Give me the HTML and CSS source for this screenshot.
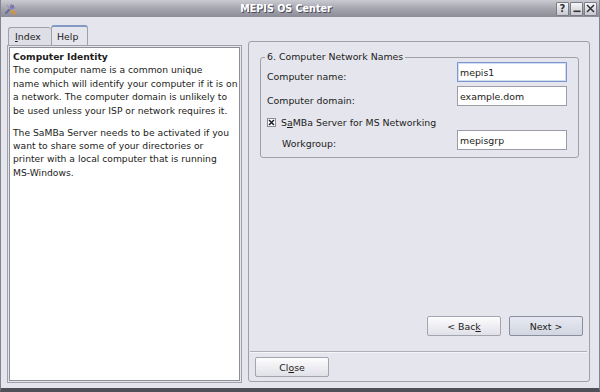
FILE: index.html
```html
<!DOCTYPE html>
<html lang="en">
<head>
    <meta charset="UTF-8">
    <title>MEPIS OS Center</title>
    <link rel="stylesheet" href="styles.css">
</head>
<body>
    <div class="window">
        <div class="titlebar">
            <span class="app-icon">
                <svg width="12" height="12" viewBox="0 0 12 12">
                    <path d="M2 10 L9 3" stroke="#6a6a9a" stroke-width="2" stroke-linecap="round"/>
                    <path d="M8 1.5 A2 2 0 1 0 10.5 4" fill="none" stroke="#8a7ab8" stroke-width="1.4"/>
                    <path d="M3 2 L8 8" stroke="#9a9ab0" stroke-width="1.2"/>
                    <path d="M8 8 L10.5 10.5" stroke="#e8901c" stroke-width="2.2" stroke-linecap="round"/>
                </svg>
            </span>
            <span class="title">MEPIS OS Center</span>
            <div class="wm-buttons">
                <span class="wm-btn">?</span>
                <span class="wm-btn">
                    <svg width="8" height="9" viewBox="0 0 8 9"><rect x="0.5" y="6.5" width="7" height="1.6" fill="#303038"/></svg>
                </span>
                <span class="wm-btn">
                    <svg width="9" height="9" viewBox="0 0 9 9"><path d="M1 1 L8 8 M8 1 L1 8" stroke="#303038" stroke-width="1.5"/></svg>
                </span>
            </div>
        </div>

        <div class="main">
            <!-- Help sidebar -->
            <div class="sidebar">
                <div class="tabs">
                    <div class="tab tab-index"><u>I</u>ndex</div>
                    <div class="tab tab-help active">Help</div>
                </div>
                <div class="tab-pane">
                    <div class="help-text">
                        <p><b>Computer Identity</b><br>The computer name is a common unique<br>name which will identify your computer if it is on<br>a network. The computer domain is unlikely to<br>be used unless your ISP or network requires it.</p>
                        <p>The SaMBa Server needs to be activated if you<br>want to share some of your directories or<br>printer with a local computer that is running<br>MS-Windows.</p>
                    </div>
                </div>
            </div>

            <!-- Wizard page -->
            <div class="wizard">
                <fieldset class="group">
                    <legend>6. Computer Network Names</legend>
                    <div class="field-row first">
                        <label>Computer name:</label>
                        <div class="input focused">mepis1</div>
                    </div>
                    <div class="field-row">
                        <label>Computer domain:</label>
                        <div class="input">example.dom</div>
                    </div>
                    <div class="check-row">
                        <span class="checkbox">
                            <svg width="7" height="7" viewBox="0 0 7 7"><path d="M1 1 L6 6 M6 1 L1 6" stroke="#202028" stroke-width="1.6"/></svg>
                        </span>
                        <span>S<u>a</u>MBa Server for MS Networking</span>
                    </div>
                    <div class="field-row sub">
                        <label>Workgroup:</label>
                        <div class="input">mepisgrp</div>
                    </div>
                </fieldset>

                <div class="spacer"></div>

                <div class="nav">
                    <button class="btn">&lt; Bac<u>k</u></button>
                    <button class="btn default">Next &gt;</button>
                </div>
                <div class="separator"></div>
                <div class="footer">
                    <button class="btn">Cl<u>o</u>se</button>
                </div>
            </div>
        </div>
    </div>
</body>
</html>
```

FILE: styles.css
```css
:root {
    --bg: #e5e5ed;
    --frame: #a0a0a8;
    --text: #1c1c20;
}

body {
    margin: 0;
    background: var(--bg);
    color: var(--text);
    font-family: "DejaVu Sans", "Liberation Sans", sans-serif;
    font-size: 9.4px;
}

.window {
    width: 600px;
    height: 392px;
    box-sizing: border-box;
    display: flex;
    flex-direction: column;
    border-left: 1px solid #84848e;
    border-right: 1px solid #84848e;
    border-bottom: 4px solid #50505a;
    background: var(--bg);
}

/* Title bar */
.titlebar {
    height: 17px;
    display: flex;
    align-items: center;
    background: linear-gradient(to bottom, #cacad2 0%, #a6a6b0 50%, #8c8c98 100%);
}

.app-icon {
    width: 12px;
    height: 12px;
    margin-left: 3px;
    display: flex;
}

.title {
    flex: 1;
    text-align: center;
    color: #fff;
    font-weight: bold;
    font-size: 9.6px;
    text-shadow: 1px 1px 0 #4a4a56;
}

.wm-buttons {
    display: flex;
    gap: 1px;
    margin-right: 2px;
}

.wm-btn {
    width: 11px;
    height: 12px;
    border: 1px solid #7c7c88;
    border-radius: 1px;
    background: linear-gradient(to bottom, #f6f6f8, #c8c8d0);
    display: flex;
    align-items: center;
    justify-content: center;
    font-weight: bold;
    font-size: 10px;
    color: #303038;
}

/* Main area */
.main {
    flex: 1;
    display: flex;
    gap: 6px;
    padding: 8px 9px 5px 6px;
}

.sidebar {
    width: 235px;
    display: flex;
    flex-direction: column;
}

.tabs {
    height: 20px;
    display: flex;
    align-items: flex-end;
    padding-left: 1px;
}

.tab {
    box-sizing: border-box;
    height: 18px;
    border: 1px solid var(--frame);
    border-bottom: none;
    border-radius: 3px 3px 0 0;
    background: #dedee6;
    display: flex;
    align-items: center;
}

.tab-index {
    width: 43px;
    padding-left: 6px;
    border-right: none;
}

.tab-help {
    width: 37px;
    padding-left: 5px;
}

.tab.active {
    height: 20px;
    background: var(--bg);
    border-top: 2px solid #8298c4;
}

.tab-pane {
    flex: 1;
    border: 1px solid var(--frame);
    padding: 1px;
    display: flex;
}

.help-text {
    flex: 1;
    background: #fff;
    border: 1px solid #8e8e98;
    padding: 2px 0 0 3px;
    font-size: 9.2px;
    line-height: 13.4px;
    white-space: nowrap;
}

.help-text p {
    margin: 0 0 8.6px 0;
}

/* Wizard panel */
.wizard {
    flex: 1;
    margin: 16px 0 1px 0;
    border: 1px solid var(--frame);
    border-radius: 3px;
    display: flex;
    flex-direction: column;
}

.group {
    margin: 9px 10px 0 11px;
    padding: 0 11px 7px 6px;
    border: 1px solid var(--frame);
    border-radius: 3px;
}

.group legend {
    margin-left: -2px;
    padding: 0 2px;
    line-height: 12px;
}

.field-row {
    display: flex;
    justify-content: space-between;
    align-items: flex-end;
    margin-top: 4px;
}

.field-row.first {
    margin-top: -1px;
}

.field-row label {
    line-height: 11px;
}

.field-row.sub {
    margin-top: 2px;
}

.field-row.sub label {
    padding-left: 15px;
    padding-bottom: 1px;
}

.input {
    box-sizing: border-box;
    width: 110px;
    height: 20px;
    background: #fff;
    border: 1px solid #9c9ca6;
    padding-left: 2px;
    display: flex;
    align-items: center;
}

.input.focused {
    border-color: #7a96cc;
    box-shadow: inset 0 0 0 1px #d4def2;
}

.check-row {
    height: 12px;
    margin-top: 10px;
    display: flex;
    align-items: center;
    gap: 5px;
}

.checkbox {
    box-sizing: border-box;
    width: 9px;
    height: 9px;
    border: 1px solid #8a8a94;
    background: #fff;
    display: flex;
    align-items: center;
    justify-content: center;
}

.spacer {
    flex: 1;
}

.nav {
    display: flex;
    justify-content: flex-end;
    gap: 8px;
    padding-right: 6px;
}

.btn {
    box-sizing: border-box;
    width: 74px;
    height: 20px;
    font-family: inherit;
    font-size: 9.4px;
    color: var(--text);
    border: 1px solid #a4a4ae;
    border-radius: 2px;
    background: linear-gradient(to bottom, #fdfdfe, #e0e0e8);
    padding: 0;
}

.btn.default {
    border-color: #8a8e9c;
    background: linear-gradient(to bottom, #e6e9f1, #d2d6e2);
}

.separator {
    margin: 15px 2px 0 1px;
    border-top: 1px solid #b0b0b8;
    border-bottom: 1px solid #f6f6fa;
}

.footer {
    padding: 4px 0 4px 6px;
}
```
